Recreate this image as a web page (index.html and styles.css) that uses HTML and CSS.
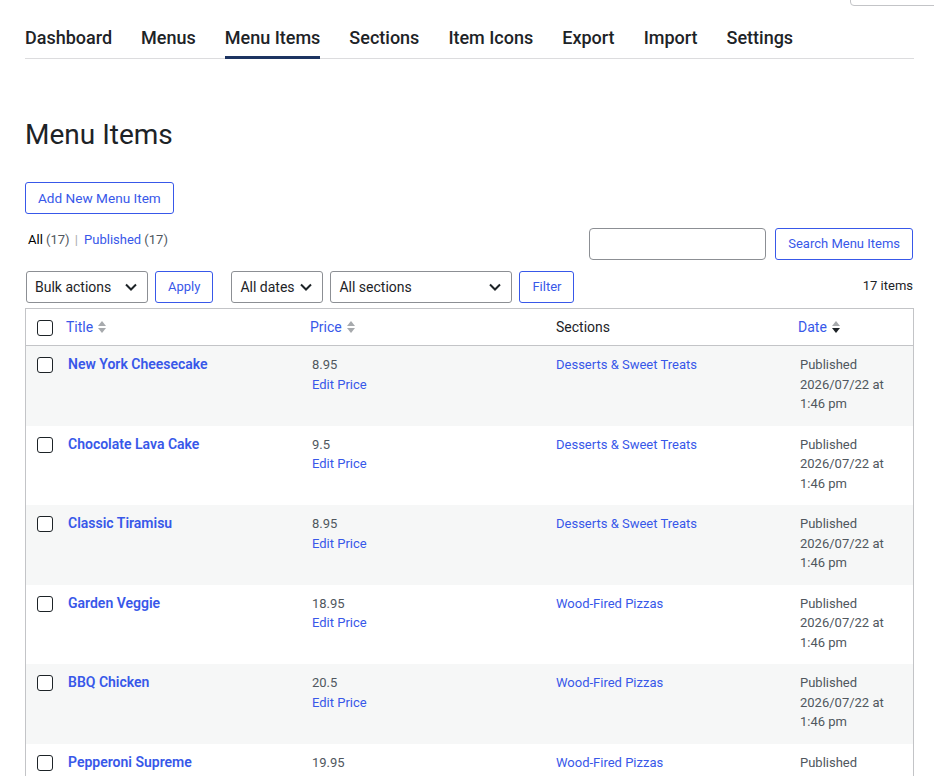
FILE: index.html
```html
<!DOCTYPE html>
<html lang="en">
<head>
  <meta charset="UTF-8">
  <title>Menu Items</title>
  <link rel="stylesheet" href="styles.css">
</head>
<body>
  <div class="screen-tab"></div>

  <div class="wrap">
    <!-- Plugin tabs -->
    <nav class="tabs">
      <a href="#">Dashboard</a>
      <a href="#">Menus</a>
      <a href="#" class="active">Menu Items</a>
      <a href="#">Sections</a>
      <a href="#">Item Icons</a>
      <a href="#">Export</a>
      <a href="#">Import</a>
      <a href="#">Settings</a>
    </nav>

    <h1>Menu Items</h1>
    <a href="#" class="btn btn-add">Add New Menu Item</a>

    <div class="top-row">
      <ul class="subsubsub">
        <li><a href="#" class="current">All <span class="count">(17)</span></a> <span class="sep">|</span></li>
        <li><a href="#">Published <span class="count">(17)</span></a></li>
      </ul>
      <div class="search-box">
        <input type="search" class="search-input">
        <a href="#" class="btn">Search Menu Items</a>
      </div>
    </div>

    <!-- Filters -->
    <div class="tablenav">
      <div class="actions">
        <div class="select w-bulk">Bulk actions
          <svg viewBox="0 0 12 8" width="12" height="8"><path d="M1 1.5l5 5 5-5" fill="none" stroke="#1d2327" stroke-width="2"/></svg>
        </div>
        <a href="#" class="btn">Apply</a>
      </div>
      <div class="actions">
        <div class="select w-dates">All dates
          <svg viewBox="0 0 12 8" width="12" height="8"><path d="M1 1.5l5 5 5-5" fill="none" stroke="#1d2327" stroke-width="2"/></svg>
        </div>
        <div class="select w-sections">All sections
          <svg viewBox="0 0 12 8" width="12" height="8"><path d="M1 1.5l5 5 5-5" fill="none" stroke="#1d2327" stroke-width="2"/></svg>
        </div>
        <a href="#" class="btn">Filter</a>
      </div>
      <span class="num-items">17 items</span>
    </div>

    <table class="list">
      <colgroup>
        <col class="c-check">
        <col class="c-wide">
        <col class="c-wide">
        <col class="c-wide">
        <col>
      </colgroup>
      <thead>
        <tr>
          <th class="check"><input type="checkbox"></th>
          <th><a href="#">Title <svg class="sort" viewBox="0 0 10 18" width="10" height="18"><path d="M1 8L5 3l4 5z" fill="#a7aaad"/><path d="M1 10l4 5 4-5z" fill="#a7aaad"/></svg></a></th>
          <th><a href="#">Price <svg class="sort" viewBox="0 0 10 18" width="10" height="18"><path d="M1 8L5 3l4 5z" fill="#a7aaad"/><path d="M1 10l4 5 4-5z" fill="#a7aaad"/></svg></a></th>
          <th class="plain">Sections</th>
          <th><a href="#">Date <svg class="sort" viewBox="0 0 10 18" width="10" height="18"><path d="M1 8L5 3l4 5z" fill="#a7aaad"/><path d="M1 10l4 5 4-5z" fill="#1d2327"/></svg></a></th>
        </tr>
      </thead>
      <tbody>
        <tr>
          <td class="check"><input type="checkbox"></td>
          <td><a href="#" class="row-title">New York Cheesecake</a></td>
          <td class="muted">8.95<br><a href="#">Edit Price</a></td>
          <td><a href="#">Desserts &amp; Sweet Treats</a></td>
          <td class="muted">Published<br>2026/07/22 at<br>1:46 pm</td>
        </tr>
        <tr>
          <td class="check"><input type="checkbox"></td>
          <td><a href="#" class="row-title">Chocolate Lava Cake</a></td>
          <td class="muted">9.5<br><a href="#">Edit Price</a></td>
          <td><a href="#">Desserts &amp; Sweet Treats</a></td>
          <td class="muted">Published<br>2026/07/22 at<br>1:46 pm</td>
        </tr>
        <tr>
          <td class="check"><input type="checkbox"></td>
          <td><a href="#" class="row-title">Classic Tiramisu</a></td>
          <td class="muted">8.95<br><a href="#">Edit Price</a></td>
          <td><a href="#">Desserts &amp; Sweet Treats</a></td>
          <td class="muted">Published<br>2026/07/22 at<br>1:46 pm</td>
        </tr>
        <tr>
          <td class="check"><input type="checkbox"></td>
          <td><a href="#" class="row-title">Garden Veggie</a></td>
          <td class="muted">18.95<br><a href="#">Edit Price</a></td>
          <td><a href="#">Wood-Fired Pizzas</a></td>
          <td class="muted">Published<br>2026/07/22 at<br>1:46 pm</td>
        </tr>
        <tr>
          <td class="check"><input type="checkbox"></td>
          <td><a href="#" class="row-title">BBQ Chicken</a></td>
          <td class="muted">20.5<br><a href="#">Edit Price</a></td>
          <td><a href="#">Wood-Fired Pizzas</a></td>
          <td class="muted">Published<br>2026/07/22 at<br>1:46 pm</td>
        </tr>
        <tr>
          <td class="check"><input type="checkbox"></td>
          <td><a href="#" class="row-title">Pepperoni Supreme</a></td>
          <td class="muted">19.95<br><a href="#">Edit Price</a></td>
          <td><a href="#">Wood-Fired Pizzas</a></td>
          <td class="muted">Published<br>2026/07/22 at<br>1:46 pm</td>
        </tr>
      </tbody>
    </table>
  </div>
</body>
</html>
```

FILE: styles.css
```css
body { margin: 0; background: #fff; color: #1d2327; font-family: Roboto, "Liberation Sans", sans-serif; font-size: 13px; line-height: 1.5; }
a { color: #3858e9; text-decoration: none; }

.screen-tab { position: absolute; top: -10px; right: -10px; width: 92px; height: 14px; border: 1px solid #c3c4c7; border-radius: 0 0 0 4px; }

.wrap { margin: 0 20px 0 25px; }

.tabs { display: flex; gap: 29px; padding-top: 25px; border-bottom: 1px solid #dcdcde; }
.tabs a { color: #1d2327; font-size: 18px; font-weight: 500; line-height: 26px; padding-bottom: 5px; border-bottom: 3px solid transparent; margin-bottom: -1px; }
.tabs a.active { border-bottom-color: #1d3461; }

h1 { font-size: 28px; font-weight: 400; line-height: 36px; margin: 58px 0 29px; }

.btn { display: inline-flex; align-items: center; height: 32px; box-sizing: border-box; padding: 0 12px; border: 1px solid #3858e9; border-radius: 3px; background: #fff; color: #3858e9; font-size: 13px; white-space: nowrap; }
.btn-add { font-size: 13.6px; }

.top-row { display: flex; justify-content: space-between; align-items: flex-start; margin-top: 14px; }
.subsubsub { list-style: none; margin: 0; padding: 2px 0 0 3px; display: flex; gap: 4px; line-height: 20px; }
.subsubsub a.current { color: #000; }
.subsubsub .count { color: #50575e; }
.subsubsub .sep { color: #a7aaad; margin: 0 2px; }
.search-box { display: flex; gap: 9px; margin-right: 1px; }
.search-input { width: 177px; height: 32px; box-sizing: border-box; border: 1px solid #8c8f94; border-radius: 4px; margin: 0; }

.tablenav { display: flex; align-items: center; gap: 18px; margin-top: 11px; padding-left: 1px; }
.actions { display: flex; gap: 7px; }
.select { display: flex; align-items: center; justify-content: space-between; height: 32px; box-sizing: border-box; padding: 0 10px 0 8px; border: 1px solid #8c8f94; border-radius: 3px; font-size: 14px; color: #1d2327; }
.w-bulk { width: 122px; }
.w-dates { width: 92px; }
.w-sections { width: 182px; }
.num-items { margin-left: auto; margin-right: 1px; margin-top: -3px; color: #1d2327; }

.list { width: 100%; margin-top: 5px; border: 1px solid #c3c4c7; border-spacing: 0; table-layout: fixed; }
.c-check { width: 32px; }
.c-wide { width: 244px; }
.list th { text-align: left; font-weight: 400; font-size: 14px; line-height: 20px; padding: 8px; border-bottom: 1px solid #c3c4c7; }
.list th.plain { padding-left: 10px; }
.list th a { display: inline-flex; align-items: center; gap: 4px; }
.list td { vertical-align: top; padding: 9px 10px 12px; line-height: 19.5px; }
.list tbody tr:nth-child(odd) { background: #f6f7f7; }
.list th.check { padding: 10px 0 8px 11px; }
.list td.check { padding: 11px 0 0 11px; }
.muted { color: #50575e; }
.row-title { font-size: 14px; font-weight: 600; }

input[type="checkbox"] { appearance: none; width: 16px; height: 16px; margin: 0; border: 1px solid #1d2327; border-radius: 3px; background: #fff; display: block; }
```
